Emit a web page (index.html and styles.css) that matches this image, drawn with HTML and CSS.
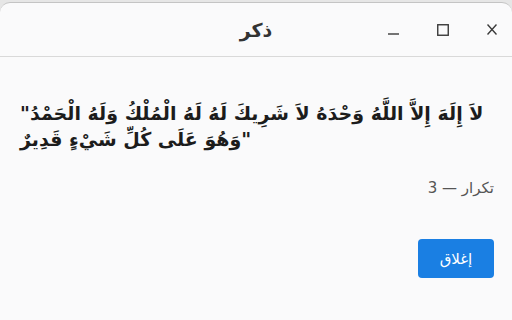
FILE: index.html
```html
<!DOCTYPE html>
<html lang="ar">
<head>
<meta charset="utf-8">
<link rel="stylesheet" href="styles.css">
</head>
<body>
<div class="window">
  <div class="titlebar">
    <div class="spacer"></div>
    <div class="title" dir="rtl">ذكر</div>
    <div class="controls">
      <svg class="ctl" width="11" height="12" viewBox="0 0 11 12"><path d="M0 10H11" stroke="#3a3a3a" stroke-width="1.4"/></svg>
      <svg class="ctl" width="12" height="12" viewBox="0 0 12 12"><rect x="0.75" y="0.75" width="10.5" height="10.5" fill="none" stroke="#3a3a3a" stroke-width="1.4"/></svg>
      <svg class="ctl" width="10" height="11" viewBox="0 0 10 11"><path d="M0.5 0.5L9.5 10.5M9.5 0.5L0.5 10.5" stroke="#3a3a3a" stroke-width="1.4"/></svg>
    </div>
  </div>
  <div class="content">
    <p class="dhikr">"لاَ إِلَهَ إِلاَّ اللَّهُ وَحْدَهُ لاَ شَرِيكَ لَهُ لَهُ الْمُلْكُ وَلَهُ الْحَمْدُ وَهُوَ عَلَى كُلِّ شَيْءٍ قَدِيرٌ"</p>
    <p class="count" dir="rtl">تكرار — 3</p>
    <div class="actions" dir="rtl">
      <button class="close-btn">إغلاق</button>
    </div>
  </div>
</div>
</body>
</html>
```
FILE: styles.css
```css
html, body {
  margin: 0;
  padding: 0;
}
body {
  width: 512px;
  height: 320px;
  overflow: hidden;
  background: #e6e6e6;
  font-family: "DejaVu Sans", sans-serif;
}
.window {
  margin-top: 2px;
  height: 318px;
  box-sizing: border-box;
  background: #fafafb;
  border-top: 1px solid #c4c4c4;
  border-radius: 10px 10px 0 0;
  display: flex;
  flex-direction: column;
}
.titlebar {
  height: 53px;
  border-bottom: 1px solid #d9d9d9;
  display: grid;
  grid-template-columns: 1fr auto 1fr;
  align-items: center;
}
.title {
  font-size: 19px;
  font-weight: bold;
  color: #333;
  padding-top: 1px;
}
.controls {
  display: flex;
  justify-content: flex-end;
  align-items: center;
  gap: 38px;
  padding-right: 15px;
}
.ctl {
  display: block;
}
.content {
  padding: 0 18px 0 20px;
  display: flex;
  flex-direction: column;
}
.dhikr {
  margin: 43px 0 0 0;
  font-size: 19px;
  font-weight: bold;
  line-height: 26px;
  color: #1c1c1c;
}
.count {
  margin: 26px 0 0 0;
  font-size: 15px;
  color: #555;
  line-height: 20px;
}
.actions {
  margin-top: 41px;
  display: flex;
}
.close-btn {
  width: 76px;
  height: 39px;
  border: none;
  border-radius: 4px;
  background: #1a7fe3;
  color: #fff;
  font-family: "DejaVu Sans", sans-serif;
  font-size: 15px;
  padding: 0;
}
```
